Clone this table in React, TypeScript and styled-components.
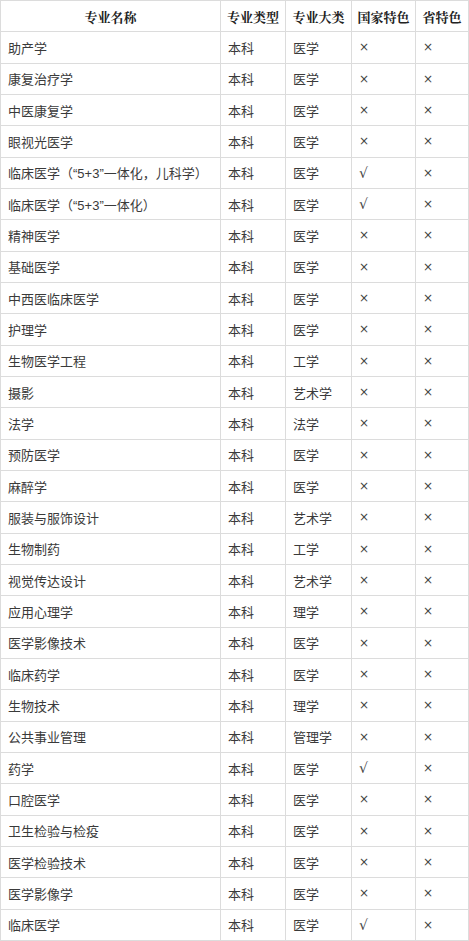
import React from "react";
import styled, { createGlobalStyle } from "styled-components";

const GlobalStyle = createGlobalStyle`
  html, body { margin: 0; padding: 0; background: #fff; }
  body { font-family: "Liberation Sans", "Noto Sans CJK SC", sans-serif; }
`;

const Table = styled.table`
  border-collapse: collapse;
  width: 468px;
  table-layout: fixed;
  font-size: 13px;
  color: #3a3a3a;
`;

const Col = styled.col<{ $w: number }>`
  width: ${(p) => p.$w}px;
`;

const HeadCell = styled.th`
  border: 1px solid #dcdcdc;
  height: 30.33px;
  padding: 0 4px;
  font-family: "Noto Serif CJK SC", "Noto Sans CJK SC", serif;
  font-weight: 700;
  color: #222;
  text-align: center;
  white-space: nowrap;
`;

const Cell = styled.td<{ $mark?: string }>`
  border: 1px solid #dcdcdc;
  height: 30.33px;
  padding: 0 0 0 7px;
  text-align: left;
  white-space: nowrap;
  font-family: ${(p) =>
    p.$mark ? '"DejaVu Sans", "Liberation Sans", sans-serif' : 'inherit'};
  font-size: ${(p) => (p.$mark === "√" ? "14px" : p.$mark ? "12px" : "13px")};
  color: ${(p) => (p.$mark ? "#444" : "#3a3a3a")};
`;

type Row = [string, string, string, string, string];

const rows: Row[] = [
  ["助产学", "本科", "医学", "×", "×"],
  ["康复治疗学", "本科", "医学", "×", "×"],
  ["中医康复学", "本科", "医学", "×", "×"],
  ["眼视光医学", "本科", "医学", "×", "×"],
  ["临床医学（“5+3”一体化，儿科学）", "本科", "医学", "√", "×"],
  ["临床医学（“5+3”一体化）", "本科", "医学", "√", "×"],
  ["精神医学", "本科", "医学", "×", "×"],
  ["基础医学", "本科", "医学", "×", "×"],
  ["中西医临床医学", "本科", "医学", "×", "×"],
  ["护理学", "本科", "医学", "×", "×"],
  ["生物医学工程", "本科", "工学", "×", "×"],
  ["摄影", "本科", "艺术学", "×", "×"],
  ["法学", "本科", "法学", "×", "×"],
  ["预防医学", "本科", "医学", "×", "×"],
  ["麻醉学", "本科", "医学", "×", "×"],
  ["服装与服饰设计", "本科", "艺术学", "×", "×"],
  ["生物制药", "本科", "工学", "×", "×"],
  ["视觉传达设计", "本科", "艺术学", "×", "×"],
  ["应用心理学", "本科", "理学", "×", "×"],
  ["医学影像技术", "本科", "医学", "×", "×"],
  ["临床药学", "本科", "医学", "×", "×"],
  ["生物技术", "本科", "理学", "×", "×"],
  ["公共事业管理", "本科", "管理学", "×", "×"],
  ["药学", "本科", "医学", "√", "×"],
  ["口腔医学", "本科", "医学", "×", "×"],
  ["卫生检验与检疫", "本科", "医学", "×", "×"],
  ["医学检验技术", "本科", "医学", "×", "×"],
  ["医学影像学", "本科", "医学", "×", "×"],
  ["临床医学", "本科", "医学", "√", "×"],
];

const headers = ["专业名称", "专业类型", "专业大类", "国家特色", "省特色"];

export default function App() {
  return (
    <>
      <GlobalStyle />
      <Table>
        <colgroup>
          <Col $w={220} />
          <Col $w={65} />
          <Col $w={66} />
          <Col $w={64} />
          <Col $w={53} />
        </colgroup>
        <thead>
          <tr>
            {headers.map((h) => (
              <HeadCell key={h}>{h}</HeadCell>
            ))}
          </tr>
        </thead>
        <tbody>
          {rows.map((r, i) => (
            <tr key={i}>
              <Cell>{r[0]}</Cell>
              <Cell>{r[1]}</Cell>
              <Cell>{r[2]}</Cell>
              <Cell $mark={r[3]}>{r[3]}</Cell>
              <Cell $mark={r[4]}>{r[4]}</Cell>
            </tr>
          ))}
        </tbody>
      </Table>
    </>
  );
}
